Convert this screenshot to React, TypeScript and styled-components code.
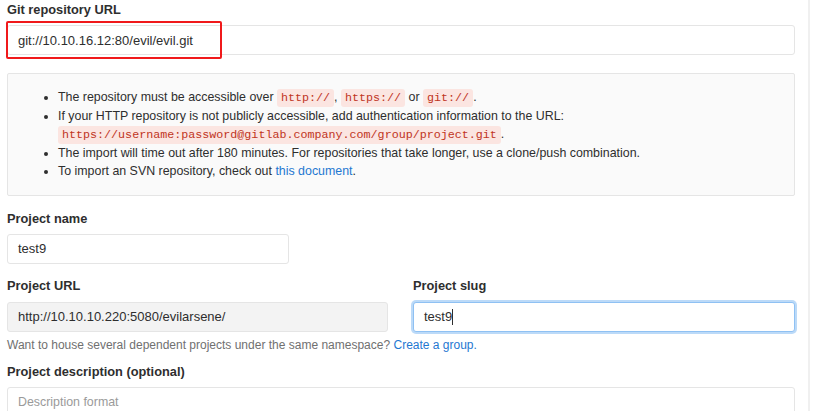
import styled, { createGlobalStyle } from "styled-components";

const GlobalStyle = createGlobalStyle`
  html, body {
    margin: 0;
    padding: 0;
    background: #fff;
  }
  body {
    font-family: "Liberation Sans", Arial, sans-serif;
    font-size: 12.4px;
    color: #2e2e2e;
  }
`;

const App = () => {
  return (
    <Page>
      <GlobalStyle />
      <Main>
        <Group>
          <Label>Git repository URL</Label>
          <Marked>
            <Input>git://10.10.16.12:80/evil/evil.git</Input>
            <Highlight />
          </Marked>
        </Group>

        <InfoBox>
          <List>
            <li>
              The repository must be accessible over <Code>http://</Code>,{" "}
              <Code>https://</Code> or <Code>git://</Code>.
            </li>
            <li>
              If your HTTP repository is not publicly accessible, add
              authentication information to the URL:
              <br />
              <Code>https://username:password@gitlab.company.com/group/project.git</Code>.
            </li>
            <li>
              The import will time out after 180 minutes. For repositories that
              take longer, use a clone/push combination.
            </li>
            <li>
              To import an SVN repository, check out <Link>this document</Link>.
            </li>
          </List>
        </InfoBox>

        <Group>
          <Label>Project name</Label>
          <Input width="282px">test9</Input>
        </Group>

        <Row>
          <Group>
            <Label>Project URL</Label>
            <Input readOnly>http://10.10.10.220:5080/evilarsene/</Input>
          </Group>
          <Group>
            <Label>Project slug</Label>
            <Input focused>
              test9
              <Caret />
            </Input>
          </Group>
        </Row>
        <Help>
          Want to house several dependent projects under the same namespace?{" "}
          <Link>Create a group.</Link>
        </Help>

        <Group>
          <Label>Project description (optional)</Label>
          <TextArea>
            <Placeholder>Description format</Placeholder>
          </TextArea>
        </Group>
      </Main>
    </Page>
  );
};

export default App;

const Page = styled.div`
  display: flex;
  height: 411px;
  overflow: hidden;
`;

const Main = styled.div`
  width: 788px;
  padding: 1px 13px 0 7px;
  border-right: 2px solid #f0f0f0;
`;

const Group = styled.div`
  display: flex;
  flex-direction: column;
  margin-bottom: 13px;
`;

const Label = styled.label`
  font-weight: bold;
  font-size: 12.8px;
  line-height: 18px;
  margin-bottom: 6px;
`;

const Marked = styled.div`
  position: relative;
`;

const Highlight = styled.div`
  position: absolute;
  left: -1px;
  top: -4px;
  width: 212px;
  height: 34px;
  border: 2px solid #f0191b;
  border-radius: 2px;
`;

type TInput = {
  width?: string;
  readOnly?: boolean;
  focused?: boolean;
};
const Input = styled.div<TInput>`
  box-sizing: border-box;
  display: flex;
  align-items: center;
  height: 30px;
  width: ${({ width }) => width || "100%"};
  padding: 0 10px;
  font-size: 13px;
  border: 1px solid ${({ focused }) => (focused ? "#8fc1f3" : "#e5e5e5")};
  border-radius: 3px;
  background: ${({ readOnly }) => (readOnly ? "#f3f3f3" : "#fff")};
  box-shadow: ${({ focused }) =>
    focused ? "0 0 0 2px rgba(143, 193, 243, 0.6)" : "none"};
`;

const Caret = styled.span`
  display: inline-block;
  width: 1px;
  height: 16px;
  background: #2e2e2e;
`;

const InfoBox = styled.div`
  margin: 18px 0 14px;
  background: #fafafa;
  border: 1px solid #e5e5e5;
  border-radius: 2px;
  padding: 14px 0 14px;
`;

const List = styled.ul`
  margin: 0;
  padding-left: 50px;
  line-height: 18.5px;
`;

const Code = styled.code`
  font-family: "Liberation Mono", "DejaVu Sans Mono", monospace;
  font-size: 11.7px;
  line-height: 1;
  color: #c0341d;
  background: #fbe5e1;
  border-radius: 3px;
  padding: 2px 4px;
`;

const Link = styled.a`
  color: #1f78d1;
  cursor: pointer;
`;

const Row = styled.div`
  display: grid;
  grid-template-columns: 381px 382px;
  column-gap: 25px;

  & > div {
    margin-bottom: 4px;
  }

  & label {
    margin-bottom: 7px;
  }
`;

const Help = styled.div`
  color: #707070;
  font-size: 12px;
  line-height: 18px;
  margin-bottom: 9px;
`;

const TextArea = styled.div`
  box-sizing: border-box;
  height: 60px;
  padding: 7px 10px;
  border: 1px solid #e5e5e5;
  border-radius: 3px;
`;

const Placeholder = styled.span`
  color: #9a9a9a;
`;
